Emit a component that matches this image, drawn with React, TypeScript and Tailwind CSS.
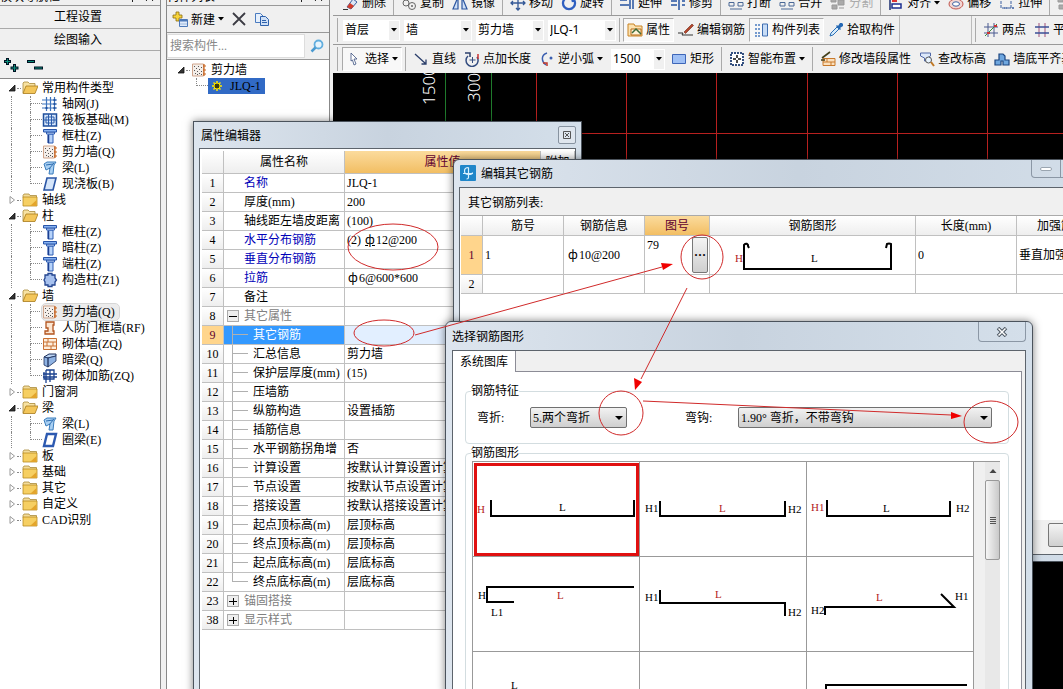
import * as React from 'react'

const song =
  "font-[family-name:'Liberation_Serif','Noto_Sans_CJK_SC',serif]"

const icons: Record<string, React.ReactNode> = {
  folder: (
    <>
      <path d="M1 3.5 2 2h5l1 1.500h6.500v2H1z" fill="#f3dc9a" stroke="#a98a3a" strokeWidth=".8" />
      <path d="M1 5h14v9H1z" fill="#f6cf62" stroke="#b98a22" strokeWidth=".8" />
      <path d="M8 14h6.500V8z" fill="#e3a52c" />
    </>
  ),
  folderOpen: (
    <>
      <path d="M1 13V3l1-1h4l1.500 1.500H13V6" fill="#f7e2a2" stroke="#a98a3a" strokeWidth=".8" />
      <path d="M1 13.500 4 6h12l-3 7.500z" fill="#f3c65a" stroke="#a87b1c" strokeWidth=".8" />
    </>
  ),
  axis: (
    <>
      <path d="M0 4h15M0 8h15M0 12h15M4.500 1v14M8.500 1v14M12.500 1v14" stroke="#3d74bd" strokeWidth="1.200" />
      <path d="M11.500 3h2v2h-2zM11.500 7h2v2h-2zM11.500 11h2v2h-2zM3.500 11h2v2h-2z" fill="#1f4f9c" />
    </>
  ),
  raft: (
    <>
      <path d="M1.500 2h13v12h-13z" fill="#d7e6fa" stroke="#1f4f9c" strokeWidth="1.500" />
      <path d="M4 5h8v6H4zM6.500 2v12M9.500 2v12M1 8h14" fill="none" stroke="#2a5cab" />
    </>
  ),
  column: (
    <>
      <path d="M6 6h5v9H6z" fill="#b7d3fa" stroke="#2f5fb5" />
      <path d="M4.500 4h8v2h-8z" fill="#dbe9fd" stroke="#2f5fb5" />
      <path d="M1.500 1.500h13v2.500h-13z" fill="#86b2f2" stroke="#2854a8" />
      <path d="M6.500 7v8" stroke="#1c3f91" strokeWidth="1.500" />
    </>
  ),
  wall: (
    <>
      <path d="M1.500 2h11v12h-11z" fill="#f4eee9" stroke="#d0a58c" />
      <path d="M3 4.500h1M7 4.500h1M10 5.500h1M5 6.500h1M8 7.500h1M3 8.500h1M6 9.500h1M10 9.500h1M4 11.500h1M8 11.500h1M6 12.500h1M10 12.500h1" stroke="#555" />
      <path d="M13 2v12M12 4h3M12 8h3M12 12h3" stroke="#c8641e" strokeWidth="1.200" />
    </>
  ),
  beam: (
    <>
      <path d="m2 4 3-2h9l-2 3-1 9H7l1-6-4 2z" fill="#a9d0f3" stroke="#3a7cbc" />
      <path d="m4 5 7-1M7 9l5-6" stroke="#2c6cb0" />
    </>
  ),
  slab: <path d="M5 2h9l-3 12H2z" fill="#d5e5fa" stroke="#2a55a5" strokeWidth="1.600" />,
  ring: <path d="M5 2h9l-3 12H2z" fill="#fff" stroke="#2c59b0" strokeWidth="2.400" />,
  structCol: <path d="M3 3h3V1.500h4V3h3v3l1.500 2L13 10v3h-3v1.500H6V13H3v-3l-1-2 1-2z" fill="#a7c1ee" stroke="#23448f" strokeWidth="1.300" />,
  door: <path d="M4 2h8v3h-1v6h1v3H3v-3h3V8H4z" fill="#fbe6d2" stroke="#b2541f" strokeWidth="1.300" />,
  brick: (
    <>
      <path d="M1.500 2.500h13v11h-13z" fill="#fdeedd" stroke="#c87033" />
      <path d="M1 6h14M1 10h14M6 2v4M11 6v4M5 6v4M9 10v4" stroke="#c87033" />
    </>
  ),
  darkBeam: (
    <>
      <path d="m2 5 5-3h7v2L6 6z" fill="#bcd4f3" stroke="#1c2f5b" />
      <path d="M2 5v8l4 2V6zM6 6l8-2v5l-8 6z" fill="#8fb3e3" stroke="#1c2f5b" strokeWidth=".8" />
    </>
  ),
  brickRebar: <path d="M4 2h8v4h3M1 6h11v5H2V4M4 2v13M12 2v7M1 9h14M8 2v12" fill="none" stroke="#1b418f" strokeWidth="1.300" />,
  sun: (
    <>
      <path d="M8 3v10M3 8h10M4.500 4.500l7 7M11.500 4.500l-7 7" stroke="#ffe600" strokeWidth="1.500" />
      <circle cx="8" cy="8" r="3" fill="#3a3a10" stroke="#ffe600" />
    </>
  ),
  add: (
    <>
      <path d="M4 1h3v3h3v3H7v3H4V7H1V4h3z" fill="#f7d43c" stroke="#8a6d12" strokeWidth=".8" />
      <path d="M7.500 8.500h8v7h-8z" fill="#dfeafa" stroke="#4c79b8" />
      <path d="M8 9.500h7" stroke="#4c79b8" strokeWidth="2" />
      <path d="M8 13h7" stroke="#9db9dd" />
    </>
  ),
  close: <path d="m2 2 12 12M14 2 2 14" stroke="#3c3c44" strokeWidth="1.800" />,
  copy: (
    <>
      <path d="M1.500 2.500h5l3 3v6h-8z" fill="#e6f0fc" stroke="#4a7bc0" />
      <path d="M6.500 5.500h5l3 3v6h-8z" fill="#cfe0f7" stroke="#2f62ac" />
      <path d="M8 9.500h4M8 11.500h5" stroke="#2f62ac" />
    </>
  ),
  search: (
    <>
      <circle cx="9.500" cy="6.500" r="4" fill="#e6f4fd" stroke="#62aede" strokeWidth="1.800" />
      <path d="m6.500 9.500-4 4" stroke="#4a9ad0" strokeWidth="2.500" />
    </>
  ),
  erase: (
    <>
      <path d="m4 12 6-8 4 3-6 7z" fill="#dce6f5" stroke="#3a5fa0" />
      <path d="m4 12 3-4 4 3-3 3z" fill="#d33c2a" />
      <path d="M0 14.500h5" stroke="#333" />
    </>
  ),
  circles: (
    <>
      <circle cx="5" cy="8" r="3" fill="none" stroke="#666" />
      <circle cx="11" cy="11" r="3.500" fill="none" stroke="#666" />
      <circle cx="11" cy="11" r="1" fill="#666" />
    </>
  ),
  mirror: <path d="M6 2v12H1zM10 2v12h5z" fill="#cfe0f7" stroke="#2c56a0" strokeWidth="1.200" />,
  move: <path d="M8 1v14M1 8h14M6 3l2-2 2 2M6 13l2 2 2-2M3 6 1 8l2 2M13 6l2 2-2 2" fill="none" stroke="#345896" strokeWidth="1.300" />,
  rotate: <path d="M5 3a6 6 0 1 0 6 0M11 3l3-1M11 3l1 4" fill="none" stroke="#2f5fc0" strokeWidth="2.300" />,
  extend: <path d="M1 5h7M1 10h9M11 2v12M14 2v12" stroke="#2552a0" strokeWidth="1.500" />,
  trim: <path d="M1 6h6M1 10h6M9 2v13M12 6h3M12 10h3" stroke="#2552a0" strokeWidth="1.500" />,
  breakLine: <path d="M1 7.500h5V11H1zM10 7.500h5V11h-5zM2 14h12" fill="none" stroke="#4a6896" />,
  split: <path d="M1 3h5v4H1zM8 5h6v5H8zM2 10h5v4H2zM9 13h5" fill="#aaa" stroke="#999" />,
  align: (
    <>
      <path d="M2 1v14" stroke="#1c2f70" strokeWidth="1.500" />
      <path d="M4 3h5v4H4z" fill="#d33" />
      <path d="M4 9h9v4H4z" fill="#fff" stroke="#1c2f90" strokeWidth="1.500" />
    </>
  ),
  offset: (
    <>
      <ellipse cx="8" cy="9" rx="7" ry="5" fill="#f3d6d2" stroke="#c0544c" />
      <ellipse cx="8" cy="9" rx="3.500" ry="2.200" fill="#fff" stroke="#3a5fa0" />
    </>
  ),
  stretch: <path d="M2 2v11h7M12 2v11h3M5 13h10" fill="none" stroke="#3a5fa0" strokeDasharray="3 1" />,
  prop: (
    <>
      <path d="M1 2h6l1 2h7v10H1z" fill="#fbe2b0" stroke="#c98324" />
      <path d="M4 7h10v6H4z" fill="#fff3d8" stroke="#b56b18" />
      <path d="m5 11 4-4 5 5" fill="none" stroke="#3d6b3a" strokeWidth="1.500" />
    </>
  ),
  pencil: (
    <>
      <path d="m6 10 8-8 1.500 1.500-8 8z" fill="#b5452c" stroke="#6b2a16" strokeWidth=".6" />
      <path d="M0 11h5l-1 2h11" fill="none" stroke="#333" />
    </>
  ),
  list: (
    <>
      <path d="M2 3h5M2 7h5M2 11h5M2 14h5" stroke="#4a7bc0" strokeDasharray="2 1" strokeWidth="1.500" />
      <path d="M9.500 2h5v12h-5z" fill="#c7dcf6" stroke="#3e6db0" />
    </>
  ),
  dropper: (
    <>
      <path d="m2 14 1-3 6-6 2 2-6 6z" fill="#d6ebfb" stroke="#2b6fb5" />
      <path d="m8 4 1-1 1 1 2-3h2l1 1v2l-3 2 1 1-1 1z" fill="#2468b4" />
    </>
  ),
  points: (
    <>
      <path d="M5 1v14M11 1v14M1 5h14M1 11h14" stroke="#4a5a90" />
      <path d="M2 14 14 2" stroke="#3a8b3a" />
      <path d="M11 4h3M4 11h3" stroke="#c33" strokeWidth="2" />
    </>
  ),
  parallel: (
    <>
      <path d="M5 1v14M11 1v14" stroke="#a0527a" />
      <path d="M1 5h14M1 11h14" stroke="#3a4f96" strokeWidth="1.300" />
    </>
  ),
  cursor: <path d="m5 2 6 6H8l2 5-2 1-1.500-5L5 10z" fill="#fff" stroke="#3c5280" strokeWidth=".8" />,
  line: <path d="m2 3 11 10M13 8.500V13H8.500" fill="none" stroke="#2b3f6b" strokeWidth="1.300" />,
  circleAdd: (
    <>
      <path d="M4 5a6 6 0 1 0 9 1" fill="none" stroke="#344d80" strokeWidth="1.500" />
      <path d="M8.500 6v6M5.500 9h6" stroke="#344d80" />
      <path d="M1 2h5v4" fill="none" stroke="#2b3f6b" strokeWidth="1.500" />
      <path d="M14 3v5" stroke="#c33" strokeWidth="1.500" />
    </>
  ),
  arc: (
    <>
      <path d="M8 2C2 4 2 10 7 14" fill="none" stroke="#3b5fb0" strokeWidth="1.500" />
      <path d="M4 12h4v3" fill="none" stroke="#c0392b" strokeWidth="1.500" />
      <circle cx="12" cy="7" r="1.500" fill="#3b5fb0" />
    </>
  ),
  rect: <path d="M1.500 3.500h13v9h-13z" fill="#9fc0f5" stroke="#3e66b8" />,
  smart: (
    <>
      <path d="M2 2h12v12H2z" fill="#fff" stroke="#345080" strokeWidth="2" strokeDasharray="2 1" />
      <path d="M8 4v3M8 9v3M4 8h3M9 8h3" stroke="#111" strokeWidth="1.500" />
    </>
  ),
  wallEdit: (
    <>
      <path d="M3 7.500h12v7H3z" fill="#fbe0bd" stroke="#c87a2c" />
      <path d="M3 11h12M7 7v4M11 11v4" stroke="#c87a2c" />
      <path d="m2 7 8-6M1 9h4" stroke="#44401c" strokeWidth="1.600" />
    </>
  ),
  inspect: (
    <>
      <path d="M1.500 2h10v3l-3 2v3h-3V7l-4-2z" fill="#dce8fa" stroke="#5068a8" />
      <circle cx="9.500" cy="9" r="3" fill="#e8f4ff" stroke="#555" />
      <path d="m12 11 3 4" stroke="#c07824" strokeWidth="2" />
    </>
  ),
  base: <path d="M1 14V9h4V3h4l2 2v4h4v5H9v-4H7v4z" fill="#6fa7df" stroke="#1b4580" strokeWidth="1.200" />,
}

function Icon({ name }: { name: string }) {
  return (
    <svg viewBox="0 0 16 16" className="size-4 shrink-0" fill="none" aria-hidden="true">
      {icons[name]}
    </svg>
  )
}

function Caret() {
  return (
    <svg viewBox="0 0 6 4" className="h-1 w-1.5 shrink-0" aria-hidden="true">
      <path d="M0 0h6L3 3.500z" fill="#000" />
    </svg>
  )
}

interface Node {
  name: string
  icon?: string
  active?: boolean
  children?: Node[]
}

const tree: Node[] = [
  {
    name: '常用构件类型',
    children: [
      { name: '轴网(J)', icon: 'axis' },
      { name: '筏板基础(M)', icon: 'raft' },
      { name: '框柱(Z)', icon: 'column' },
      { name: '剪力墙(Q)', icon: 'wall' },
      { name: '梁(L)', icon: 'beam' },
      { name: '现浇板(B)', icon: 'slab' },
    ],
  },
  { name: '轴线' },
  {
    name: '柱',
    children: [
      { name: '框柱(Z)', icon: 'column' },
      { name: '暗柱(Z)', icon: 'column' },
      { name: '端柱(Z)', icon: 'column' },
      { name: '构造柱(Z1)', icon: 'structCol' },
    ],
  },
  {
    name: '墙',
    children: [
      { name: '剪力墙(Q)', icon: 'wall', active: true },
      { name: '人防门框墙(RF)', icon: 'door' },
      { name: '砌体墙(ZQ)', icon: 'brick' },
      { name: '暗梁(Q)', icon: 'darkBeam' },
      { name: '砌体加筋(ZQ)', icon: 'brickRebar' },
    ],
  },
  { name: '门窗洞' },
  {
    name: '梁',
    children: [
      { name: '梁(L)', icon: 'beam' },
      { name: '圈梁(E)', icon: 'ring' },
    ],
  },
  { name: '板' },
  { name: '基础' },
  { name: '其它' },
  { name: '自定义' },
  { name: 'CAD识别' },
]

function Arrow({ open }: { open: boolean }) {
  return (
    <svg viewBox="0 0 8 8" className="size-2 shrink-0" aria-hidden="true">
      {open ? (
        <path d="M7 1v6H1z" fill="#333" stroke="#111" strokeWidth=".8" />
      ) : (
        <path d="M2 .5v7L6.500 4z" fill="#fff" stroke="#999" />
      )}
    </svg>
  )
}

function Branch({ last }: { last: boolean }) {
  return (
    <span className="flex h-4 w-3 shrink-0 flex-col">
      <span className="h-2 border-b border-l border-dotted border-[#888]" />
      <span className={last ? 'h-2' : 'h-2 border-l border-dotted border-[#888]'} />
    </span>
  )
}

function Tree() {
  return (
    <ul className="pt-px">
      {tree.map(group => (
        <li key={group.name}>
          <div className="flex h-4 items-center pl-2">
            <Arrow open={!!group.children} />
            <span className="mx-px w-1 border-t border-dotted border-[#888]" />
            <Icon name={group.children ? 'folderOpen' : 'folder'} />
            <span className="pl-1">{group.name}</span>
          </div>
          {group.children && (
            <ul>
              {group.children.map((item, i) => (
                <li key={item.name} className="flex h-4 items-center pl-[11px]">
                  <span className="h-4 w-[19px] shrink-0 border-l border-dotted border-[#888]" />
                  <Branch last={i === group.children!.length - 1} />
                  <span
                    className={
                      item.active
                        ? 'flex h-4 items-center rounded-sm bg-[#ececec] pr-1 outline outline-[#d6d6d6]'
                        : 'flex h-4 items-center'
                    }>
                    <Icon name={item.icon!} />
                    <span className="pl-1">{item.name}</span>
                  </span>
                </li>
              ))}
            </ul>
          )}
        </li>
      ))}
    </ul>
  )
}

function PanelTitle({ text }: { text: string }) {
  return (
    <div className="-mt-3 flex h-[18px] items-center justify-between border-b border-[#999] pr-1.5">
      <span>{text}</span>
      <svg viewBox="0 0 26 10" className="h-2.5 w-[26px]" fill="none" stroke="#222" aria-hidden="true">
        <path d="M1 6.500h6M4.500 6v4M2.500 1v5M5.500 1v5M18 1l7 8M25 1l-7 8" />
      </svg>
    </div>
  )
}

function Navigator() {
  return (
    <aside className={`flex w-[161px] shrink-0 flex-col border-r border-[#888] text-xs ${song}`}>
      <PanelTitle text="模块导航栏" />
      <button className="h-[23px] border-b border-[#aaa] pr-1">工程设置</button>
      <button className="h-[22px] border-b border-[#aaa] pr-1">绘图输入</button>
      <div className="flex h-7 items-center gap-2 border-b border-[#888] px-[3px]">
        <button aria-label="展开">
          <svg viewBox="0 0 16 16" className="size-4">
            <path d="M4.500 1v7M1 4.500h7M11.500 7v8M7.500 11h8" stroke="#012" strokeWidth="3" />
            <path d="M4.500 2v5M2 4.500h5M11.500 8v6M8.500 11h6" stroke="#0b8f7a" />
          </svg>
        </button>
        <button aria-label="折叠">
          <svg viewBox="0 0 16 16" className="size-4">
            <path d="M0 4.500h8M7 11h9" stroke="#012" strokeWidth="3" />
            <path d="M1 4.500h6M8 11h7" stroke="#0b8f7a" />
          </svg>
        </button>
      </div>
      <div className="flex-1 bg-white">
        <Tree />
      </div>
    </aside>
  )
}

function ComponentList() {
  return (
    <aside className={`ml-[5px] flex w-[164px] shrink-0 flex-col border-x border-[#888] text-xs ${song}`}>
      <PanelTitle text="构件列表" />
      <div className="flex h-[27px] items-center gap-[7px] border-b border-[#999] pl-[5px] font-[family-name:'Noto_Sans_CJK_SC',sans-serif]">
        <button className="flex items-center gap-[3px]">
          <Icon name="add" />
          新建
          <Caret />
        </button>
        <button aria-label="删除">
          <Icon name="close" />
        </button>
        <button aria-label="复制">
          <Icon name="copy" />
        </button>
      </div>
      <div className="flex h-[27px] items-center border-b border-[#999]">
        <input
          aria-label="搜索构件"
          placeholder="搜索构件..."
          className="h-6 w-[138px] border border-[#ddd] bg-white px-0.5 placeholder:text-[#888]"
        />
        <button aria-label="搜索" className="pl-1">
          <Icon name="search" />
        </button>
      </div>
      <div className="flex-1 bg-white pt-0.5">
        <div className="flex h-4 items-center pl-2.5">
          <Arrow open />
          <span className="mx-px w-1 border-t border-dotted border-[#888]" />
          <Icon name="wall" />
          <span className="pl-1">剪力墙</span>
        </div>
        <div className="flex h-4 items-center pl-[29px]">
          <Branch last />
          <span className="flex h-4 w-[57px] items-center gap-[5px] bg-[#316ac5] pl-px">
            <Icon name="sun" />
            JLQ-1
          </span>
        </div>
      </div>
    </aside>
  )
}

function Tool({ icon, text, pressed, caret, disabled }: { icon: string; text: string; pressed?: boolean; caret?: boolean; disabled?: boolean }) {
  return (
    <button
      disabled={disabled}
      className={`flex h-6 shrink-0 items-center gap-[3px] px-1 whitespace-nowrap disabled:text-[#aaa] ${
        pressed ? 'border border-[#aaa] border-r-white border-b-white bg-[#f8f8f8] px-[3px]' : ''
      }`}>
      <Icon name={icon} />
      {text}
      {caret && <Caret />}
    </button>
  )
}

function Sep() {
  return <span className="mx-[3px] h-6 w-px shrink-0 bg-[#aaa]" />
}

function Combo({ label, value, width }: { label: string; value: string; width: string }) {
  return (
    <span className={`relative flex h-[21px] shrink-0 items-center ${width}`}>
      <select aria-label={label} defaultValue={value} className="size-full appearance-none bg-white pl-0.5">
        <option>{value}</option>
      </select>
      <span className="pointer-events-none absolute inset-y-px right-px flex w-2.5 items-center justify-center bg-[#f0f0f0]">
        <Caret />
      </span>
    </span>
  )
}

function Toolbars() {
  return (
    <div className="bg-[#f0f0f0] font-[family-name:'Noto_Sans','Noto_Sans_CJK_SC',sans-serif] text-xs">
      <div className="-mt-3 flex h-7 items-center border-b border-[#999] pt-0.5 pl-1">
        <span className="mr-0.5 h-6 w-px bg-[#aaa]" />
        <Tool icon="erase" text="删除" />
        <Sep />
        <Tool icon="circles" text="复制" />
        <Tool icon="mirror" text="镜像" />
        <Sep />
        <Tool icon="move" text="移动" />
        <Tool icon="rotate" text="旋转" />
        <Sep />
        <Tool icon="extend" text="延伸" />
        <Tool icon="trim" text="修剪" />
        <Sep />
        <Tool icon="breakLine" text="打断" />
        <Tool icon="breakLine" text="合并" />
        <Tool icon="split" text="分割" disabled />
        <Sep />
        <Tool icon="align" text="对齐" caret />
        <Tool icon="offset" text="偏移" />
        <Tool icon="stretch" text="拉伸" />
        <Sep />
        <Tool icon="split" text="" />
      </div>
      <div className="flex h-[29px] items-center border-b border-[#999] pl-1">
        <span className="mr-[5px] h-6 w-px shrink-0 bg-[#aaa]" />
        <div className="flex gap-1">
          <Combo label="楼层" value="首层" width="w-[57px]" />
          <Combo label="类型" value="墙" width="w-[68px]" />
          <Combo label="构件" value="剪力墙" width="w-[68px]" />
          <Combo label="名称" value="JLQ-1" width="w-[68px]" />
        </div>
        <Sep />
        <Tool icon="prop" text="属性" pressed />
        <Tool icon="pencil" text="编辑钢筋" />
        <Tool icon="list" text="构件列表" pressed />
        <Tool icon="dropper" text="拾取构件" />
        <span className="h-7 w-[73px] shrink-0 border-x border-[#bbb]" />
        <Sep />
        <Tool icon="points" text="两点" />
        <Tool icon="parallel" text="平行" />
      </div>
      <div className="flex h-7 items-center pl-1">
        <span className="mr-1 h-6 w-px shrink-0 bg-[#aaa]" />
        <Tool icon="cursor" text="选择" pressed caret />
        <Sep />
        <Tool icon="line" text="直线" />
        <Tool icon="circleAdd" text="点加长度" />
        <Tool icon="arc" text="逆小弧" caret />
        <span className="mr-0.5 ml-1 flex">
          <Combo label="半径" value="1500" width="w-[54px]" />
        </span>
        <Tool icon="rect" text="矩形" />
        <Sep />
        <Tool icon="smart" text="智能布置" caret />
        <Sep />
        <Tool icon="wallEdit" text="修改墙段属性" />
        <Tool icon="inspect" text="查改标高" />
        <Tool icon="base" text="墙底平齐基础" />
      </div>
    </div>
  )
}

// axis lines of the drawing area
function Canvas() {
  return (
    <svg className="min-h-0 w-full flex-1 bg-black">
      <path d="M112.500 0v90M158.500 0v90" stroke="#1f7a2c" />
      <path d="M203.500 0v700M293.500 0v700M383.500 0v700M474.500 0v700M564.500 0v700M654.500 0v700M203 60.500h900" stroke="#b8201f" />
      <g fill="#fff" fontFamily="Noto Sans" fontSize="17" fontWeight="300">
        <text transform="translate(102 32) rotate(-90)">1500</text>
        <text transform="translate(147 29) rotate(-90)">3000</text>
      </g>
    </svg>
  )
}

function Rebar({ level2 }: { level2?: boolean }) {
  return (
    <span className={`inline-block h-3 w-3 text-center leading-3 font-[family-name:'Noto_Sans_CJK_SC'] ${level2 ? 'underline' : ''}`}>
      ф
    </span>
  )
}

interface Prop {
  no: number
  name: string
  value?: React.ReactNode
  kind?: 'key' | 'open' | 'closed' | 'child'
}

const props: Prop[] = [
  { no: 1, name: '名称', value: 'JLQ-1', kind: 'key' },
  { no: 2, name: '厚度(mm)', value: '200' },
  { no: 3, name: '轴线距左墙皮距离', value: '(100)' },
  { no: 4, name: '水平分布钢筋', value: <>(2) <Rebar level2 />12@200</>, kind: 'key' },
  { no: 5, name: '垂直分布钢筋', kind: 'key' },
  { no: 6, name: '拉筋', value: <><Rebar />6@600*600</>, kind: 'key' },
  { no: 7, name: '备注' },
  { no: 8, name: '其它属性', kind: 'open' },
  { no: 9, name: '其它钢筋', kind: 'child' },
  { no: 10, name: '汇总信息', value: '剪力墙', kind: 'child' },
  { no: 11, name: '保护层厚度(mm)', value: '(15)', kind: 'child' },
  { no: 12, name: '压墙筋', kind: 'child' },
  { no: 13, name: '纵筋构造', value: '设置插筋', kind: 'child' },
  { no: 14, name: '插筋信息', kind: 'child' },
  { no: 15, name: '水平钢筋拐角增', value: '否', kind: 'child' },
  { no: 16, name: '计算设置', value: '按默认计算设置计算', kind: 'child' },
  { no: 17, name: '节点设置', value: '按默认节点设置计算', kind: 'child' },
  { no: 18, name: '搭接设置', value: '按默认搭接设置计算', kind: 'child' },
  { no: 19, name: '起点顶标高(m)', value: '层顶标高', kind: 'child' },
  { no: 20, name: '终点顶标高(m)', value: '层顶标高', kind: 'child' },
  { no: 21, name: '起点底标高(m)', value: '层底标高', kind: 'child' },
  { no: 22, name: '终点底标高(m)', value: '层底标高', kind: 'child' },
  { no: 23, name: '锚固搭接', kind: 'closed' },
  { no: 38, name: '显示样式', kind: 'closed' },
]

const cell = 'border-r border-b border-[#c0c0c0] p-0 overflow-hidden whitespace-nowrap'
const head = `${cell} bg-linear-to-b from-white to-[#eee] font-normal`
const headHot = `${cell} bg-linear-to-b from-[#fbdb9c] to-[#f2be62] font-normal text-[#600030]`
const numHot = `${cell} bg-[#ffd58c] text-center font-normal text-[#600030]`

function PropName({ item }: { item: Prop }) {
  if (item.kind === 'child') {
    return (
      <span className="flex h-[18px] items-center pl-2">
        <span className="flex h-[19px] w-4 shrink-0 flex-col">
          <span className="h-[9px] border-b border-l border-[#b0b0b0]" />
          <span className={item.no === 22 ? 'flex-1' : 'flex-1 border-l border-[#b0b0b0]'} />
        </span>
        <span className="pl-[5px]">{item.name}</span>
      </span>
    )
  }
  if (item.kind === 'open' || item.kind === 'closed') {
    return (
      <span className="flex h-[18px] items-center gap-[5px] pl-[3px] text-[#808080]">
        <button aria-label={item.name} className="flex size-3 items-center justify-center border border-[#aaa] bg-[#eee]">
          <svg viewBox="0 0 8 8" className="size-2">
            <path d={item.kind === 'open' ? 'M0 4.500h8' : 'M0 4.500h8M4.500 1v7'} stroke="#000" />
          </svg>
        </button>
        {item.name}
      </span>
    )
  }
  return <span className={item.kind === 'key' ? 'pl-5 text-[#0000b8]' : 'pl-5'}>{item.name}</span>
}

const frame =
  'absolute flex flex-col border border-[#4b535c] bg-linear-to-r from-[#dde5ee] via-[#c8d3df] to-[#d4dfea] shadow-[0_0_8px_rgba(0,0,0,0.5)]'

function PropertyEditor() {
  return (
    <section className={`${frame} -bottom-2 left-[193px] top-[121px] w-[389px] px-[5px]`}>
      <header className="flex h-[26px] shrink-0 items-center justify-between pb-px pl-0.5">
        <h2 className="font-[family-name:'Noto_Sans_CJK_SC',sans-serif]">属性编辑器</h2>
        <button aria-label="关闭" className="flex size-[18px] items-center justify-center rounded-xs border border-[#8793a0] bg-[#dfe6ee]">
          <svg viewBox="0 0 8 8" className="size-2">
            <path d="M.5.5h7v7h-7zM2 2l4 4M6 2 2 6" fill="none" stroke="#555" />
          </svg>
        </button>
      </header>
      <div className="flex-1 overflow-hidden border border-[#5d646c] bg-white pt-0.5 pl-0.5">
        <table className="w-full table-fixed border-separate border-spacing-0 leading-4">
          <colgroup>
            <col className="w-[22px]" />
            <col className="w-[121px]" />
            <col className="w-[196px]" />
            <col />
          </colgroup>
          <thead>
            <tr className="h-[23px]">
              <th className={head} />
              <th className={head}>属性名称</th>
              <th className={headHot}>属性值</th>
              <th className={head}>附加</th>
            </tr>
          </thead>
          <tbody>
            {props.map(item => {
              const active = item.no === 9
              return (
                <tr key={item.no} className="h-[19px]">
                  <th className={active ? numHot : head}>{item.no}</th>
                  <td className={active ? `${cell} bg-[#3399ff] text-white` : cell}>
                    <PropName item={item} />
                  </td>
                  <td className={active ? `${cell} bg-[#e2efff]` : cell}>
                    <span className="pl-0.5">{item.value}</span>
                  </td>
                  <td className={cell} />
                </tr>
              )
            })}
          </tbody>
        </table>
      </div>
    </section>
  )
}

function RebarEditor() {
  return (
    <section className={`${frame} left-[453px] -right-20 top-[159px] h-[403px] rounded-md px-[5px] pb-1.5`}>
      <header className="flex h-[27px] shrink-0 items-start justify-between">
        <div className="flex h-[27px] items-center gap-[5px] pb-px pl-px">
          <svg viewBox="0 0 16 16" className="size-4">
            <rect width="16" height="16" rx="1" fill="#1f86c9" />
            <path d="M8.500 2.500v10q0 1.500-2 1.500M3 8.500h10M8.500 2.500q-4 0-4 3.500t4 3.500 4-2" fill="none" stroke="#d9f1ff" strokeWidth="1.200" />
          </svg>
          <h2 className="font-[family-name:'Noto_Sans_CJK_SC',sans-serif]">编辑其它钢筋</h2>
        </div>
        <div className="flex h-[18px] overflow-hidden rounded-b border border-t-0 border-[#8b97a5]">
          <button aria-label="最小化" className="flex w-[29px] items-center justify-center border-r border-[#8b97a5]">
            <span className="h-1 w-3 rounded-xs border border-[#9aa5b0] bg-white" />
          </button>
          <button aria-label="最大化" className="w-[27px] border-r border-[#8b97a5]" />
          <button aria-label="关闭" className="w-12" />
        </div>
      </header>
      <div className="flex flex-1 flex-col border border-[#5d646c] bg-[#f0f0f0]">
        <p className="flex h-[27px] items-center pt-0.5 pl-2">其它钢筋列表:</p>
        <div className="flex-1 border-t border-[#aaa] bg-white pl-px">
          <table className="w-full table-fixed border-separate border-spacing-0 leading-4">
            <colgroup>
              <col className="w-[22px]" />
              <col className="w-[81px]" />
              <col className="w-[81px]" />
              <col className="w-[65px]" />
              <col className="w-[206px]" />
              <col className="w-[101px]" />
              <col />
            </colgroup>
            <thead>
              <tr className="h-5">
                <th className={head} />
                <th className={head}>筋号</th>
                <th className={head}>钢筋信息</th>
                <th className={headHot}>图号</th>
                <th className={head}>钢筋图形</th>
                <th className={head}>长度(mm)</th>
                <th className={`${head} pl-5 text-left`}>加强筋类型</th>
              </tr>
            </thead>
            <tbody>
              <tr className="h-[39px]">
                <th className={numHot}>1</th>
                <td className={`${cell} pl-0.5`}>1</td>
                <td className={`${cell} pl-[3px]`}>
                  <Rebar />10@200
                </td>
                <td className={cell}>
                  <span className="flex h-[38px] justify-between pt-px pr-px pl-0.5">
                    79
                    <button className="h-9 w-4 rounded-xs border border-[#777] bg-linear-to-b from-[#f4f4f4] to-[#cfcfcf] leading-3 font-bold">
                      ···
                    </button>
                  </span>
                </td>
                <td className={cell}>
                  <svg width="205" height="38" className="block text-[11px]">
                    <path d="M39 12l-1-2V9q-1-2-3-1l-1 1v24h147V8q-2-1-4 0l-1 4" fill="none" stroke="#000" strokeWidth="2" />
                    <text x="25" y="26" fill="#b22222">H</text>
                    <text x="101" y="26">L</text>
                  </svg>
                </td>
                <td className={`${cell} pl-0.5`}>0</td>
                <td className={`${cell} pl-0.5`}>垂直加强筋</td>
              </tr>
              <tr className="h-[19px]">
                <th className={head}>2</th>
                <td className={cell} />
                <td className={cell} />
                <td className={cell} />
                <td className={cell} />
                <td className={cell} />
                <td className={cell} />
              </tr>
            </tbody>
          </table>
        </div>
        <div className="flex h-[34px] justify-end pt-[3px] pr-4">
          <button aria-label="确定" className="h-6 w-[72px] rounded-xs border border-[#777] bg-linear-to-b from-[#f4f4f4] to-[#d0d0d0]">
            确定
          </button>
        </div>
      </div>
    </section>
  )
}

interface Shape {
  d: string
  // label, x, baseline, red
  labels: [string, number, number, boolean?][]
}

const shapes: Shape[] = [
  { d: 'M18 38v16h143V38', labels: [['H', 4, 51, true], ['L', 86, 49]] },
  { d: 'M20 39v15h125V39', labels: [['H1', 5, 50], ['L', 79, 50, true], ['H2', 148, 51]] },
  { d: 'M20 38v16h123V39', labels: [['H1', 4, 49, true], ['L', 76, 50], ['H2', 149, 50]] },
  { d: 'M161 30H14v15h27', labels: [['H', 5, 42], ['L', 84, 42, true], ['L1', 18, 59]] },
  { d: 'M20 33v13h125v13', labels: [['H1', 5, 44], ['L', 75, 41, true], ['H2', 148, 59]] },
  { d: 'M18 58v-8h129l-13-13', labels: [['H2', 4, 57], ['L', 69, 44, true], ['H1', 148, 43]] },
  { d: '', labels: [['L', 38, 37]] },
  { d: '', labels: [] },
  { d: 'M19 60V33h141', labels: [] },
]

function GroupSelect({ id, label, value, options, width }: { id: string; label: string; value: string; options: string[]; width: string }) {
  return (
    <>
      <label htmlFor={id} className="w-[53px] shrink-0">
        {label}
      </label>
      <span className={`relative flex h-[21px] items-center ${width}`}>
        <select
          id={id}
          defaultValue={value}
          className="size-full appearance-none rounded-xs border border-[#707070] bg-linear-to-b from-[#f2f2f2] to-[#cfcfcf] pl-0.5">
          {options.map(item => (
            <option key={item}>{item}</option>
          ))}
        </select>
        <svg viewBox="0 0 8 4" className="pointer-events-none absolute right-1 h-1 w-2">
          <path d="M0 0h8L4 4z" />
        </svg>
      </span>
    </>
  )
}

function ShapePicker() {
  return (
    <section className={`${frame} -bottom-2 left-[445px] top-[321px] w-[588px] rounded-md px-1.5`}>
      <header className="flex h-7 shrink-0 items-start justify-between">
        <h2 className="leading-7 font-[family-name:'Noto_Sans_CJK_SC',sans-serif]">选择钢筋图形</h2>
        <button aria-label="关闭" className="flex h-5 w-12 items-center justify-center rounded-b border border-t-0 border-[#8b97a5]">
          <svg viewBox="0 0 12 10" className="h-2.5 w-3">
            <path d="m2 1 8 8M10 1 2 9" stroke="#4a5560" strokeWidth="3.500" />
            <path d="m2.500 1.500 7 7M9.500 1.500l-7 7" stroke="#fff" strokeWidth="1.500" />
          </svg>
        </button>
      </header>
      <div className="flex flex-1 flex-col overflow-hidden border border-[#5d646c] bg-[#f0f0f0]">
        <div role="tablist" className="flex h-5 shrink-0">
          <button role="tab" aria-selected className="relative z-10 h-[21px] w-[63px] border-r border-[#8c8c96] bg-white">
            系统图库
          </button>
        </div>
        <div className="mr-[3px] flex-1 border-t border-r border-[#8c8c96] bg-white px-3 pt-[11px]">
          <fieldset className="mb-px rounded-sm border border-[#d3dde0]">
            <legend className="ml-[5px] leading-4">钢筋特征</legend>
            <div className="flex items-center pt-2 pr-4 pb-[15px] pl-[11px]">
              <GroupSelect id="bend" label="弯折:" value="5.两个弯折" options={['5.两个弯折']} width="w-[97px]" />
              <span className="w-[58px]" />
              <GroupSelect id="hook" label="弯钩:" value="1.90° 弯折，不带弯钩" options={['1.90° 弯折，不带弯钩']} width="flex-1" />
            </div>
          </fieldset>
          <fieldset className="rounded-sm border border-[#d3dde0]">
            <legend className="ml-[5px] leading-4">钢筋图形</legend>
            <div className="mr-2 ml-1.5 flex border-t border-[#999] bg-[#f0f0f0]">
              <div className="grid flex-1 grid-cols-3 border-l border-[#999] bg-white">
                {shapes.map((item, i) => (
                  <button key={i} className="relative h-[95px] overflow-hidden border-r border-b border-[#999]">
                    <svg width="166" height="94" className="block text-[11px]">
                      <path d={item.d} fill="none" stroke="#000" strokeWidth="2" />
                      {item.labels.map(([text, x, y, red]) => (
                        <text key={text} x={x} y={y} fill={red ? '#b22222' : '#000'}>
                          {text}
                        </text>
                      ))}
                    </svg>
                    {i === 0 && <span className="absolute inset-0 mt-px ml-px border-[3px] border-[#e01010]" />}
                  </button>
                ))}
              </div>
              <div className="ml-[11px] flex w-[15px] flex-col items-center bg-[#e8e8e8]">
                <svg viewBox="0 0 8 4" className="my-[7px] h-1 w-2">
                  <path d="M4 0l3.500 4h-7z" fill="#444" />
                </svg>
                <div className="flex h-20 w-full flex-col items-center justify-center gap-px rounded-xs border border-[#999] bg-linear-to-r from-[#f6f6f6] to-[#c9c9c9]">
                  <span className="h-px w-1.5 bg-[#555]" />
                  <span className="h-px w-1.5 bg-[#555]" />
                  <span className="h-px w-1.5 bg-[#555]" />
                  <span className="h-px w-1.5 bg-[#555]" />
                </div>
              </div>
            </div>
          </fieldset>
        </div>
      </div>
    </section>
  )
}

// red callouts that link the three dialogs
function Callouts() {
  return (
    <svg className="pointer-events-none absolute inset-0 size-full" fill="none" stroke="#d02a2a">
      <ellipse cx="393" cy="247" rx="45" ry="23" />
      <ellipse cx="384" cy="333" rx="30" ry="13" />
      <ellipse cx="702" cy="257" rx="21" ry="22" />
      <circle cx="621" cy="413" r="22" />
      <ellipse cx="991" cy="422" rx="27" ry="21" />
      <path d="M415 335 662 267M687 288 641 379M643 401l308 14" />
      <path d="m673 264-12-1 2 7zM635 390l-1-12 8 4zM962 416l-11-4v7z" fill="#f00000" stroke="none" />
    </svg>
  )
}

export default function App() {
  return (
    <div className="relative flex h-screen w-full overflow-hidden bg-[#f0f0f0] text-black">
      <Navigator />
      <ComponentList />
      <main className="ml-[3px] flex min-w-0 flex-1 flex-col overflow-hidden">
        <Toolbars />
        <Canvas />
      </main>
      <div className={`text-xs ${song}`}>
        <PropertyEditor />
        <RebarEditor />
        <ShapePicker />
      </div>
      <Callouts />
    </div>
  )
}
